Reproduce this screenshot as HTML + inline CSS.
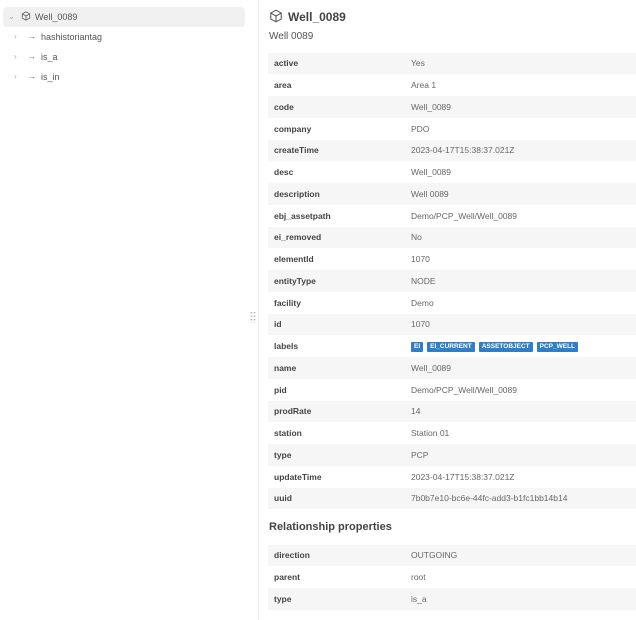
<!DOCTYPE html>
<html><head><style>
*{margin:0;padding:0;box-sizing:border-box}
body{width:636px;height:620px;background:#fff;font-family:"Liberation Sans",sans-serif;color:#444;position:relative;overflow:hidden}
.sel{position:absolute;left:3px;top:7px;width:242px;height:20px;background:#f0f0f0;border-radius:4px}
.t{position:absolute;font-size:9px;color:#555;white-space:nowrap}
.chev{position:absolute;font-size:8px;color:#aaa}
.div{position:absolute;left:258px;top:0;width:1px;height:620px;background:#ececec}
.grip{position:absolute;left:250px;top:311px;width:6px;height:12px;background-image:radial-gradient(circle,#bbb 0.8px,transparent 1px);background-size:3px 3.5px}
.tbl{position:absolute;left:268px;width:368px}
.r{height:21.75px;display:flex;align-items:center;font-size:8.5px}
.r:nth-child(odd){background:#f6f6f6}
.k{width:143px;padding-left:6px;font-weight:bold;color:#444}
.v{color:#666}
.b{display:inline-block;background:#2f7fc8;color:#fff;font-size:6.5px;font-weight:bold;padding:1px 3px;margin-right:4px;border-radius:1px;line-height:8px}
</style></head><body>
<div class="sel"></div>
<span class="chev" style="left:8px;top:12px">⌄</span>
<svg style="position:absolute;left:21px;top:11px" width="10" height="10" viewBox="0 0 24 24" fill="none" stroke="#666" stroke-width="2"><path d="M12 2l9 5v10l-9 5-9-5V7z M3 7l9 5 9-5 M12 12v10"/></svg>
<span class="t" style="left:35px;top:12px">Well_0089</span>
<span class="chev" style="left:14px;top:32px">›</span><span class="t" style="left:27px;top:31px;color:#777">→</span><span class="t" style="left:41px;top:32px">hashistoriantag</span>
<span class="chev" style="left:14px;top:52px">›</span><span class="t" style="left:27px;top:51px;color:#777">→</span><span class="t" style="left:41px;top:52px">is_a</span>
<span class="chev" style="left:14px;top:72px">›</span><span class="t" style="left:27px;top:71px;color:#777">→</span><span class="t" style="left:41px;top:72px">is_in</span>
<div class="div"></div><div class="grip"></div>
<svg style="position:absolute;left:269px;top:9px" width="14" height="14" viewBox="0 0 24 24" fill="none" stroke="#555" stroke-width="1.8"><path d="M12 2l9 5v10l-9 5-9-5V7z M3 7l9 5 9-5 M12 12v10"/></svg>
<div class="t" style="left:288px;top:10px;font-size:12px;font-weight:bold;color:#444">Well_0089</div>
<div class="t" style="left:269px;top:31px;font-size:10px;color:#555">Well 0089</div>
<div class="tbl" style="top:52.5px">
<div class="r"><span class="k">active</span><span class="v">Yes</span></div>
<div class="r"><span class="k">area</span><span class="v">Area 1</span></div>
<div class="r"><span class="k">code</span><span class="v">Well_0089</span></div>
<div class="r"><span class="k">company</span><span class="v">PDO</span></div>
<div class="r"><span class="k">createTime</span><span class="v">2023-04-17T15:38:37.021Z</span></div>
<div class="r"><span class="k">desc</span><span class="v">Well_0089</span></div>
<div class="r"><span class="k">description</span><span class="v">Well 0089</span></div>
<div class="r"><span class="k">ebj_assetpath</span><span class="v">Demo/PCP_Well/Well_0089</span></div>
<div class="r"><span class="k">ei_removed</span><span class="v">No</span></div>
<div class="r"><span class="k">elementId</span><span class="v">1070</span></div>
<div class="r"><span class="k">entityType</span><span class="v">NODE</span></div>
<div class="r"><span class="k">facility</span><span class="v">Demo</span></div>
<div class="r"><span class="k">id</span><span class="v">1070</span></div>
<div class="r"><span class="k">labels</span><span class="v"><span class="b">EI</span><span class="b">EI_CURRENT</span><span class="b">ASSETOBJECT</span><span class="b">PCP_WELL</span></span></div>
<div class="r"><span class="k">name</span><span class="v">Well_0089</span></div>
<div class="r"><span class="k">pid</span><span class="v">Demo/PCP_Well/Well_0089</span></div>
<div class="r"><span class="k">prodRate</span><span class="v">14</span></div>
<div class="r"><span class="k">station</span><span class="v">Station 01</span></div>
<div class="r"><span class="k">type</span><span class="v">PCP</span></div>
<div class="r"><span class="k">updateTime</span><span class="v">2023-04-17T15:38:37.021Z</span></div>
<div class="r"><span class="k">uuid</span><span class="v">7b0b7e10-bc6e-44fc-add3-b1fc1bb14b14</span></div>
</div>
<div class="t" style="left:269px;top:521px;font-size:11px;font-weight:bold;color:#444">Relationship properties</div>
<div class="tbl" style="top:544.5px">
<div class="r"><span class="k">direction</span><span class="v">OUTGOING</span></div>
<div class="r"><span class="k">parent</span><span class="v">root</span></div>
<div class="r"><span class="k">type</span><span class="v">is_a</span></div>
</div>
</body></html>
